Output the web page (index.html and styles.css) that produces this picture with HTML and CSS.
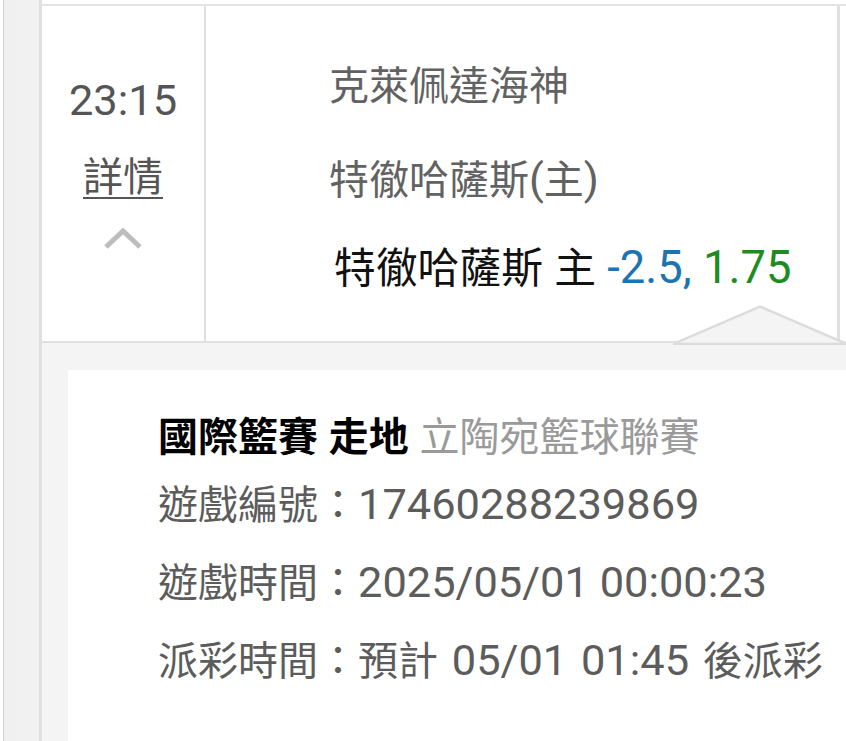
FILE: index.html
```html
<!DOCTYPE html>
<html lang="zh-Hant">
<head>
<meta charset="utf-8">
<link rel="stylesheet" href="styles.css">
</head>
<body>
<div class="outer">
  <div class="table">
    <div class="prev-row"></div>
    <div class="row">
      <div class="time-col">
        <div class="time"><span class="l">23:15</span></div>
        <a class="detail">詳情</a>
        <svg class="chev" width="38" height="24" viewBox="0 0 38 24"><polyline points="2,21 19,5 36,21" fill="none" stroke="#bdbdbd" stroke-width="5"/></svg>
      </div>
      <div class="info-col">
        <div class="team">克萊佩達海神</div>
        <div class="team team2">特徹哈薩斯<span class="l">(</span>主<span class="l">)</span></div>
        <div class="pick">特徹哈薩斯<span class="l"> </span>主<span class="l"> <span class="hdp">-2.5,</span> <span class="odds">1.75</span></span></div>
      </div>
      <svg class="caret" width="174" height="40" viewBox="0 0 174 40"><polygon points="0,39 87,1.5 174,39" fill="#f4f4f4" stroke="#dcdcdc" stroke-width="2.5"/></svg>
    </div>
    <div class="panel">
      <div class="card">
        <div class="league"><b>國際籃賽<span class="l"> </span>走地</b><span class="l"> </span><span class="league-name">立陶宛籃球聯賽</span></div>
        <div class="line">遊戲編號：<span class="l">17460288239869</span></div>
        <div class="line">遊戲時間：<span class="l">2025/05/01 00:00:23</span></div>
        <div class="line">派彩時間：預計<span class="l wide"> 05/01 01:45 </span>後派彩</div>
      </div>
    </div>
  </div>
</div>
</body>
</html>
```
FILE: styles.css
```css
*, *::before, *::after {
  box-sizing: border-box;
}
html, body {
  margin: 0;
  padding: 0;
  background: #fff;
  height: 100%;
  overflow: hidden;
}
body {
  font-family: Roboto, "Noto Sans CJK TC", sans-serif;
  font-size: 40px;
}
.l {
  font-size: 1.085em;
}
.wide {
  word-spacing: 3px;
}
.outer {
  margin-left: 3px;
  border-left: 1px solid #d0d0d0;
  padding-left: 35px;
  background: linear-gradient(to right, #f0f0f0, #fbfbfb 40%, #f7f7f7);
  height: 100%;
}
.table {
  border-left: 3px solid #e0e0e0;
  background: #fff;
  height: 100%;
  display: flex;
  flex-direction: column;
}
.prev-row {
  height: 6px;
  border-bottom: 2px solid #e4e4e4;
  background: #fff;
  flex: none;
}
.row {
  position: relative;
  display: flex;
  flex: none;
  height: 337px;
  width: 798px;
  border-bottom: 2px solid #e0e0e0;
}
.time-col {
  width: 164px;
  border-right: 2px solid #e0e0e0;
  display: flex;
  flex-direction: column;
  align-items: center;
  padding-top: 70px;
  color: #555;
}
.time {
  line-height: 50px;
  height: 50px;
}
.detail {
  margin-top: 27px;
  line-height: 50px;
  height: 50px;
  color: #555;
  text-decoration: underline;
  text-decoration-thickness: 2px;
  text-underline-offset: 6px;
}
.chev {
  margin-top: 23px;
}
.info-col {
  flex: 1;
  border-right: 3px solid #e0e0e0;
  padding-left: 123px;
  padding-top: 56px;
  display: flex;
  flex-direction: column;
}
.team {
  color: #626262;
  line-height: 50px;
  height: 50px;
  white-space: nowrap;
}
.team2 {
  margin-top: 43px;
}
.pick {
  margin-top: 38px;
  margin-left: 5px;
  font-size: 41.8px;
  line-height: 50px;
  height: 50px;
  color: #111;
  white-space: nowrap;
}
.hdp {
  color: #1c74b0;
}
.odds {
  color: #1f8c22;
}
.caret {
  position: absolute;
  left: 631px;
  top: 299px;
  display: block;
}
.panel {
  flex: 1;
  display: flex;
  flex-direction: column;
  background: #f4f4f4;
  padding: 27px 0 0 26px;
  margin-right: -10px;
}
.card {
  flex: 1;
  background: #fff;
  padding: 38px 0 0 90px;
  white-space: nowrap;
}
.league {
  line-height: 58px;
  height: 58px;
  color: #000;
}
.league b {
  font-weight: 700;
}
.league-name {
  color: #9a9a9a;
}
.line {
  line-height: 78px;
  height: 78px;
  color: #5c5c5c;
}
```
